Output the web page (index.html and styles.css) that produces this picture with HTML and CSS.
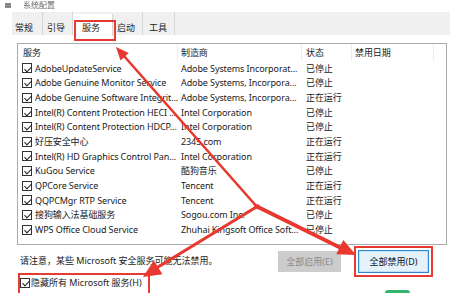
FILE: index.html
```html
<!DOCTYPE html>
<html lang="zh-CN">
<head>
<meta charset="utf-8">
<title>系统配置</title>
<link rel="stylesheet" href="styles.css">
</head>
<body>
<div class="window">
  <div class="title"><span class="app-icon"></span><span class="title-text">系统配置</span></div>
  <div class="tabs">
    <div class="tab t1">常规</div>
    <div class="tab t2">引导</div>
    <div class="tab t3 active">服务</div>
    <div class="tab t4">启动</div>
    <div class="tab t5">工具</div>
  </div>
  <div class="page">
    <div class="list">
      <div class="row head">
        <div class="c1">服务</div><div class="c2">制造商</div><div class="c3">状态</div><div class="c4">禁用日期</div>
      </div>
      <div class="row"><div class="c1"><span class="cb"></span>AdobeUpdateService</div><div class="c2">Adobe Systems Incorporat...</div><div class="c3">已停止</div><div class="c4"></div></div>
      <div class="row"><div class="c1"><span class="cb"></span>Adobe Genuine Monitor Service</div><div class="c2">Adobe Systems, Incorpora...</div><div class="c3">已停止</div><div class="c4"></div></div>
      <div class="row"><div class="c1"><span class="cb"></span>Adobe Genuine Software Integrit...</div><div class="c2">Adobe Systems, Incorpora...</div><div class="c3">正在运行</div><div class="c4"></div></div>
      <div class="row"><div class="c1"><span class="cb"></span>Intel(R) Content Protection HECI ...</div><div class="c2">Intel Corporation</div><div class="c3">已停止</div><div class="c4"></div></div>
      <div class="row"><div class="c1"><span class="cb"></span>Intel(R) Content Protection HDCP...</div><div class="c2">Intel Corporation</div><div class="c3">已停止</div><div class="c4"></div></div>
      <div class="row"><div class="c1"><span class="cb"></span>好压安全中心</div><div class="c2">2345.com</div><div class="c3">正在运行</div><div class="c4"></div></div>
      <div class="row"><div class="c1"><span class="cb"></span>Intel(R) HD Graphics Control Pan...</div><div class="c2">Intel Corporation</div><div class="c3">正在运行</div><div class="c4"></div></div>
      <div class="row"><div class="c1"><span class="cb"></span>KuGou Service</div><div class="c2">酷狗音乐</div><div class="c3">已停止</div><div class="c4"></div></div>
      <div class="row"><div class="c1"><span class="cb"></span>QPCore Service</div><div class="c2">Tencent</div><div class="c3">正在运行</div><div class="c4"></div></div>
      <div class="row"><div class="c1"><span class="cb"></span>QQPCMgr RTP Service</div><div class="c2">Tencent</div><div class="c3">正在运行</div><div class="c4"></div></div>
      <div class="row"><div class="c1"><span class="cb"></span>搜狗输入法基础服务</div><div class="c2">Sogou.com Inc.</div><div class="c3">已停止</div><div class="c4"></div></div>
      <div class="row"><div class="c1"><span class="cb"></span>WPS Office Cloud Service</div><div class="c2">Zhuhai Kingsoft Office Soft...</div><div class="c3">已停止</div><div class="c4"></div></div>
    </div>
    <div class="actions">
      <div class="note">请注意，某些 Microsoft 安全服务可能无法禁用。</div>
      <div class="btn disabled">全部启用(E)</div>
      <div class="btn focus">全部禁用(D)</div>
    </div>
    <div class="hide-row">
      <div class="hide"><span class="cb"></span>隐藏所有 Microsoft 服务(H)</div>
    </div>
  </div>
</div>
<svg class="arrows" width="450" height="293" viewBox="0 0 450 293">
  <g stroke="#e8382f" stroke-linecap="round" fill="none">
    <line x1="258" y1="208" x2="124" y2="56" stroke-width="2.6"/>
    <line x1="256" y1="206" x2="341" y2="248" stroke-width="4"/>
    <line x1="258" y1="206" x2="158" y2="267" stroke-width="3.2"/>
  </g>
  <g fill="#e8382f">
    <polygon points="116,47 128.7,53.1 120.5,60.4"/>
    <polygon points="356,255 336.3,254.3 343.3,239.9"/>
    <polygon points="143,277 153.9,260.6 162.5,274.2"/>
  </g>
</svg>
<div class="mark"></div>
</body>
</html>
```

FILE: styles.css
```css
* { box-sizing: border-box; }

body {
  margin: 0;
  width: 450px;
  height: 293px;
  overflow: hidden;
  position: relative;
  background: #fff;
  font-family: "Noto Sans", "Noto Sans CJK SC", sans-serif;
  font-size: 9px;
  color: #1a1a1a;
}

.title {
  height: 10px;
  padding-left: 5px;
  display: flex;
  align-items: center;
  gap: 12px;
  color: #6a6a6a;
  filter: blur(0.4px);
}

.app-icon {
  width: 6px;
  height: 5px;
  background: #8a8a8a;
}

.title-text {
  font-size: 8px;
  line-height: 10px;
}

.tabs {
  margin: 2px 0 0 12px;
  height: 23px;
  background: #f0f0f0;
  display: flex;
}

.tab {
  position: relative;
  border-right: 1px solid #d6d6d6;
  display: flex;
  align-items: flex-end;
  padding: 0 0 1px 4px;
  color: #222;
}

.t1 { width: 31px; padding-left: 3px; }
.t2 { width: 30px; }
.t3 { width: 40px; padding-left: 9px; }
.t4 { width: 30px; }
.t5 { width: 32px; padding-left: 6px; }

.tab.active {
  background: #fff;
  margin-top: 2px;
  margin-bottom: -1px;
  padding-bottom: 2px;
}

.tab.active::after {
  content: "";
  position: absolute;
  left: 1px;
  top: 6px;
  width: 38px;
  height: 17px;
  border: 2px solid #e53b33;
}

.page {
  padding-top: 8px;
}

.list {
  margin: 0 3px 0 17px;
  height: 202px;
  border: 1px solid #ababab;
  letter-spacing: -0.1px;
}

.row {
  display: grid;
  grid-template-columns: 160px 124px 50px 82px;
  height: 14.667px;
  align-items: center;
}

.row > div {
  white-space: nowrap;
  overflow: hidden;
}

.row.head {
  height: 17px;
  align-items: stretch;
}

.row.head > div {
  display: flex;
  align-items: center;
  border-right: 1px solid #ececec;
}

.c1 {
  padding-left: 4px;
  display: flex;
  align-items: center;
}

.row.head .c1 { padding-left: 5px; }
.c2 { padding-left: 3px; }
.c3 { padding-left: 4px; }
.c4 { padding-left: 3px; }

.cb {
  flex: none;
  width: 10px;
  height: 10px;
  margin-right: 3px;
  border: 1px solid #333;
  background: #fff;
  position: relative;
}

.cb::after {
  content: "";
  position: absolute;
  left: 2.5px;
  top: 0.5px;
  width: 3px;
  height: 6px;
  border: solid #222;
  border-width: 0 1.2px 1.2px 0;
  transform: rotate(45deg);
}

.actions {
  margin-top: 5px;
  height: 23px;
  display: flex;
  align-items: center;
}

.note {
  margin-left: 20px;
  margin-right: auto;
  margin-bottom: 3px;
}

.btn {
  display: flex;
  align-items: center;
  justify-content: center;
}

.btn.disabled {
  width: 63px;
  height: 21px;
  background: #cccccc;
  color: #8a8a8a;
  margin-right: 17px;
}

.btn.focus {
  width: 71px;
  height: 23px;
  margin-right: 21px;
  background: #e5f1fb;
  border: 1px solid #2f86c9;
  box-shadow: inset 0 0 0 1px #bfe0f5;
  outline: 2px solid #e53b33;
  outline-offset: 2px;
  color: #111;
}

.hide-row {
  margin-left: 18px;
}

.hide {
  display: inline-flex;
  align-items: center;
  border: 2px solid #e53b33;
  padding: 2px 6px 5px 0;
  height: 22px;
}

.hide .cb {
  margin-right: 1px;
}

.arrows {
  position: absolute;
  left: 0;
  top: 0;
  pointer-events: none;
}

.mark {
  position: absolute;
  left: 385px;
  top: 290px;
  width: 25px;
  height: 6px;
  background: #37b46b;
  border-radius: 3px 3px 0 0;
}
```
